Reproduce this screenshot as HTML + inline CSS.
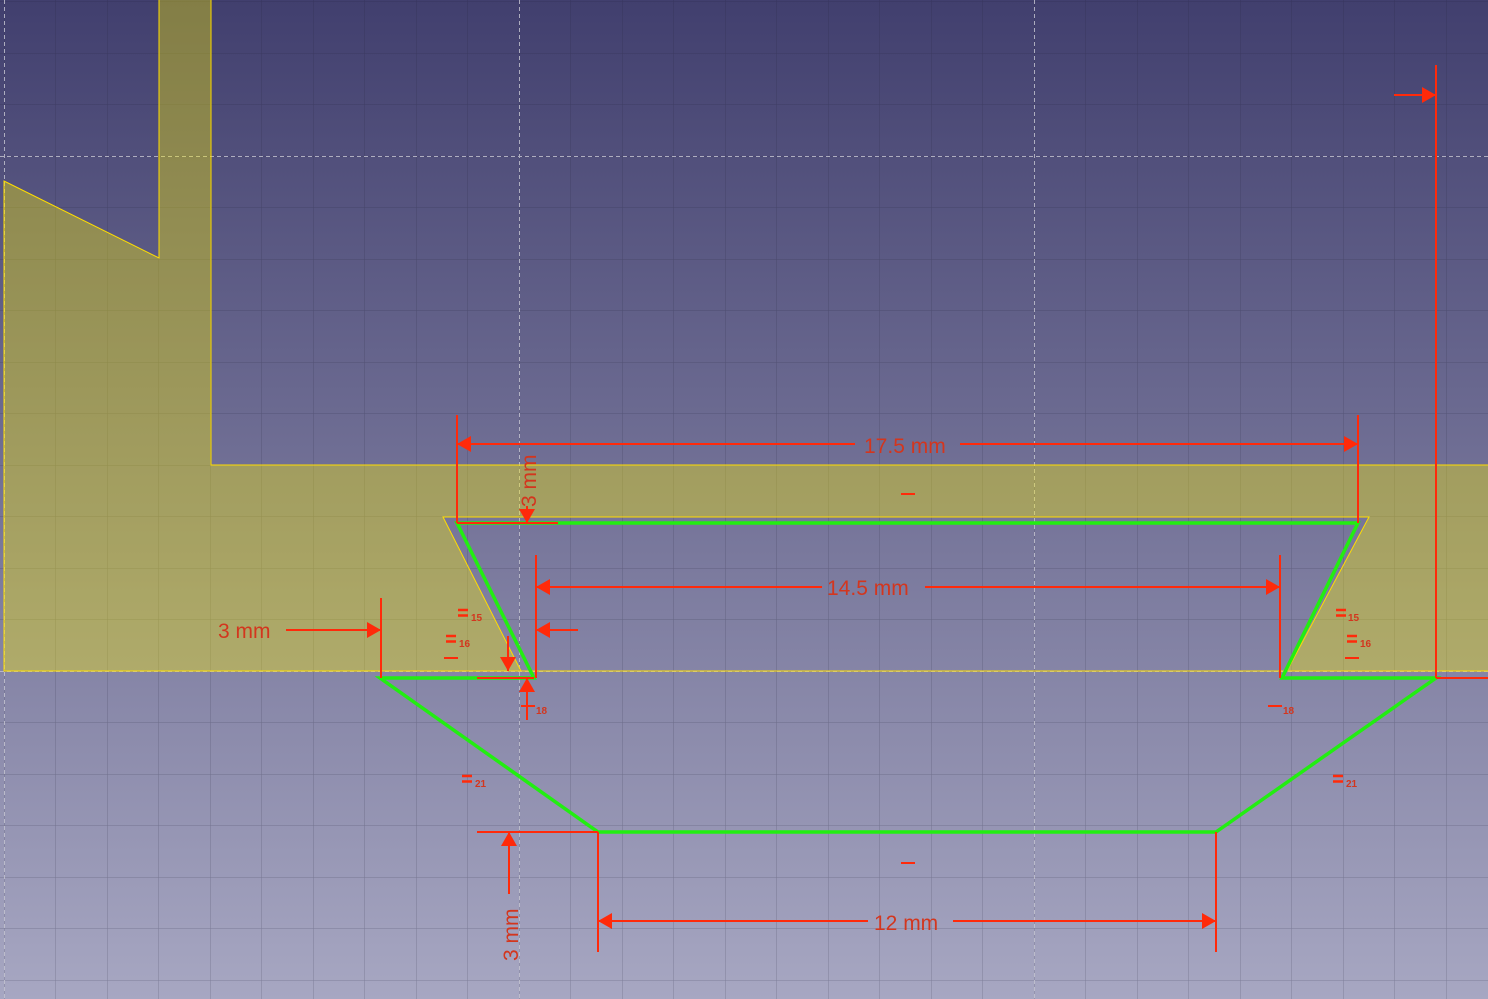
<!DOCTYPE html>
<html><head><meta charset="utf-8"><style>
html,body{margin:0;padding:0;width:1488px;height:999px;overflow:hidden}
svg{display:block}
text{font-family:"Liberation Sans",sans-serif;fill:#d3361e}
</style></head><body>
<svg width="1488" height="999" viewBox="0 0 1488 999" xmlns="http://www.w3.org/2000/svg">
<defs>
<linearGradient id="bg" x1="0" y1="0" x2="0" y2="1">
<stop offset="0" stop-color="#413f6e"/><stop offset="1" stop-color="#a7a7c2"/>
</linearGradient>
<pattern id="grid" patternUnits="userSpaceOnUse" x="4" y="156" width="51.5" height="51.5">
<path d="M0 0H51.5M0 0V51.5" stroke="rgba(30,30,50,0.28)" stroke-width="1" fill="none"/>
</pattern>
<marker id="ar" viewBox="0 0 14 16" refX="14" refY="8" markerWidth="14" markerHeight="16" markerUnits="userSpaceOnUse" orient="auto">
<path d="M0 0L14 8L0 16Z" fill="#ff2a0a"/></marker>
</defs>
<rect width="1488" height="999" fill="url(#bg)"/>
<rect width="1488" height="999" fill="url(#grid)"/>
<g stroke="#c8c8d4" stroke-width="1" stroke-dasharray="4,3" opacity="0.8">
<line x1="0" y1="156.5" x2="1488" y2="156.5"/>
<line x1="0" y1="671.5" x2="1488" y2="671.5"/>
<line x1="4.5" y1="0" x2="4.5" y2="999"/>
<line x1="519.5" y1="0" x2="519.5" y2="999"/>
<line x1="1034.5" y1="0" x2="1034.5" y2="999"/>
</g>
<path fill-rule="evenodd" fill="rgba(250,238,0,0.36)" stroke="#ffdd00" stroke-width="1"
 d="M4 181L159 258V-2H211V465H1490V671H4Z M443 517H1369L1287 671H521Z"/>
<g stroke="#22ee11" stroke-width="3.5" fill="none">
<path d="M457 523H1358L1282 678H1436L1216 832H598L380 678H534Z"/>
</g>
<g stroke="#ff2a0a" stroke-width="2" fill="none">
<line x1="457" y1="415" x2="457" y2="523"/><line x1="1358" y1="415" x2="1358" y2="523"/>
<line x1="855" y1="444" x2="457" y2="444" marker-end="url(#ar)"/>
<line x1="960" y1="444" x2="1358" y2="444" marker-end="url(#ar)"/>
<line x1="536" y1="555" x2="536" y2="678"/><line x1="1280" y1="555" x2="1280" y2="678"/>
<line x1="822" y1="587" x2="536" y2="587" marker-end="url(#ar)"/>
<line x1="925" y1="587" x2="1280" y2="587" marker-end="url(#ar)"/>
<line x1="578" y1="630" x2="536" y2="630" marker-end="url(#ar)"/>
<line x1="381" y1="598" x2="381" y2="678"/>
<line x1="286" y1="630" x2="381" y2="630" marker-end="url(#ar)"/>
<line x1="457" y1="523" x2="558" y2="523"/>
<line x1="527" y1="506" x2="527" y2="523" marker-end="url(#ar)"/>
<line x1="508" y1="636" x2="508" y2="671" marker-end="url(#ar)"/>
<line x1="477" y1="678" x2="534" y2="678"/>
<line x1="527" y1="720" x2="527" y2="678" marker-end="url(#ar)"/>
<line x1="521" y1="706" x2="535" y2="706"/>
<line x1="1268" y1="706" x2="1282" y2="706"/>
<line x1="598" y1="832" x2="598" y2="952"/><line x1="1216" y1="832" x2="1216" y2="952"/>
<line x1="868" y1="921" x2="598" y2="921" marker-end="url(#ar)"/>
<line x1="953" y1="921" x2="1216" y2="921" marker-end="url(#ar)"/>
<line x1="477" y1="832" x2="598" y2="832"/>
<line x1="509" y1="894" x2="509" y2="832" marker-end="url(#ar)"/>
<line x1="1436" y1="65" x2="1436" y2="678"/>
<line x1="1436" y1="678" x2="1488" y2="678"/>
<line x1="1394" y1="95" x2="1436" y2="95" marker-end="url(#ar)"/>
<line x1="901" y1="494" x2="915" y2="494"/><line x1="901" y1="863" x2="915" y2="863"/>
<line x1="444" y1="658" x2="458" y2="658"/><line x1="1345" y1="658" x2="1359" y2="658"/>
<path stroke-width="2.5" d="M458 610h10M458 615.5h10M446 636h10M446 641.5h10M1336 610h10M1336 615.5h10M1347 636h10M1347 641.5h10M462 776h10M462 781.5h10M1333 776h10M1333 781.5h10"/>
</g>
<g font-size="21">
<text x="864" y="453">17.5 mm</text>
<text x="827" y="595">14.5 mm</text>
<text x="218" y="638">3 mm</text>
<text x="874" y="930">12 mm</text>
<text transform="translate(536,507) rotate(-90)">3 mm</text>
<text transform="translate(518,961) rotate(-90)">3 mm</text>
</g>
<g font-size="10" font-weight="bold">
<text x="471" y="621">15</text><text x="459" y="647">16</text><text x="536" y="714">18</text>
<text x="1348" y="621">15</text><text x="1360" y="647">16</text><text x="1283" y="714">18</text>
<text x="475" y="787">21</text><text x="1346" y="787">21</text>
</g>
</svg>
</body></html>
